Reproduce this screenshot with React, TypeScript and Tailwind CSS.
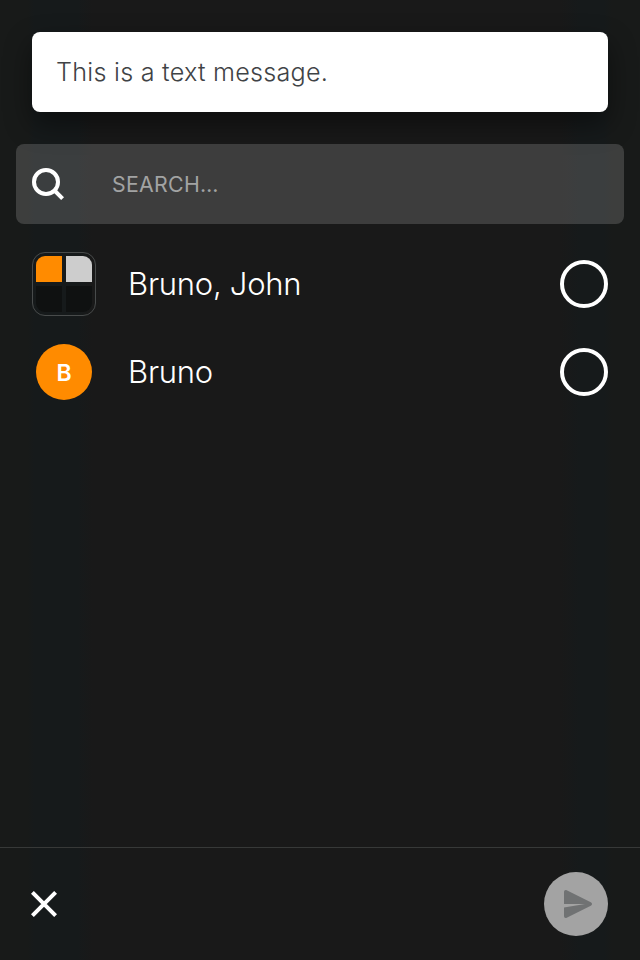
import React from "react";

function SearchIcon() {
  return (
    <svg width="32" height="32" viewBox="0 0 32 32" fill="none" stroke="#fff" strokeWidth="4">
      <circle cx="14" cy="14" r="12" />
      <path d="M22.500 22.500 30.600 30.600" />
    </svg>
  );
}

function CloseIcon() {
  return (
    <svg width="26" height="26" viewBox="0 0 26 26" fill="none" stroke="#fff" strokeWidth="4">
      <path d="M1.400 1.400 24.600 24.600M24.600 1.400 1.400 24.600" />
    </svg>
  );
}

function SendIcon() {
  return (
    <svg width="28" height="28" viewBox="0 0 28 28" fill="#707273">
      <path d="M0 13.900V2C0 .4 1.300-.4 2.700.3L26.800 12.300C28.400 13.100 28.400 14.900 26.800 15.700L2.700 27.700C1.300 28.400 0 27.600 0 26V17.500L21 13.900Z" />
    </svg>
  );
}

function Row({ avatar, name }: { avatar: React.ReactNode; name: string }) {
  return (
    <li className="flex h-[88px] items-center px-8">
      <div className="flex w-16 shrink-0 justify-center">{avatar}</div>
      <span className="ml-8 flex-1 text-[31px] leading-10 font-light tracking-[-0.25px] text-white">{name}</span>
      <span className="size-12 rounded-full border-4 border-white" />
    </li>
  );
}

function GroupAvatar() {
  return (
    <div className="size-16 rounded-[13px] border border-[#484b4b] p-[3px]">
      <div className="grid h-14 grid-cols-[26px_26px] grid-rows-[26px_26px] gap-1 overflow-hidden rounded-[9px]">
        <span className="bg-[#ff8b00]" />
        <span className="bg-[#cdcdcd]" />
        <span className="bg-[#0f1111]" />
        <span className="bg-[#0f1111]" />
      </div>
    </div>
  );
}

export default function App() {
  return (
    <div className="flex h-[960px] w-[640px] flex-col overflow-hidden bg-[linear-gradient(90deg,#181a19_0,#181a19_28px,#161a1b_34px,#161a1b_78px,#191919_92px,#191919_560px,#161a1b_580px,#161a1b_604px,#181a19_612px,#181a19_100%)] font-['Inter','Liberation_Sans',sans-serif]">
      <div className="mx-8 mt-8 flex h-20 shrink-0 items-center rounded-lg bg-white px-6 pt-0.5 text-[25.2px] font-light tracking-[0.24px] text-[#3f4346] shadow-[0_12px_28px_rgba(0,0,0,0.45)]">
        This is a text message.
      </div>
      <div className="mx-4 mt-8 flex h-20 shrink-0 items-center rounded-lg bg-white/16 px-4">
        <SearchIcon />
        <span className="ml-12 pt-0.5 text-[21.3px] tracking-[0.3px] text-[#a2a3a3]">SEARCH…</span>
      </div>
      <ul className="mt-4 flex-1">
        <Row avatar={<GroupAvatar />} name="Bruno, John" />
        <Row
          avatar={
            <div className="flex size-14 items-center justify-center rounded-full bg-[#ff8b00] pt-0.5 text-[23px] font-semibold text-white">
              B
            </div>
          }
          name="Bruno"
        />
      </ul>
      <footer className="flex h-[113px] shrink-0 items-center justify-between border-t border-[#373938] pr-8 pl-[31px]">
        <CloseIcon />
        <div className="flex size-16 items-center justify-center rounded-full bg-[#a3a3a3] pl-1">
          <SendIcon />
        </div>
      </footer>
    </div>
  );
}
